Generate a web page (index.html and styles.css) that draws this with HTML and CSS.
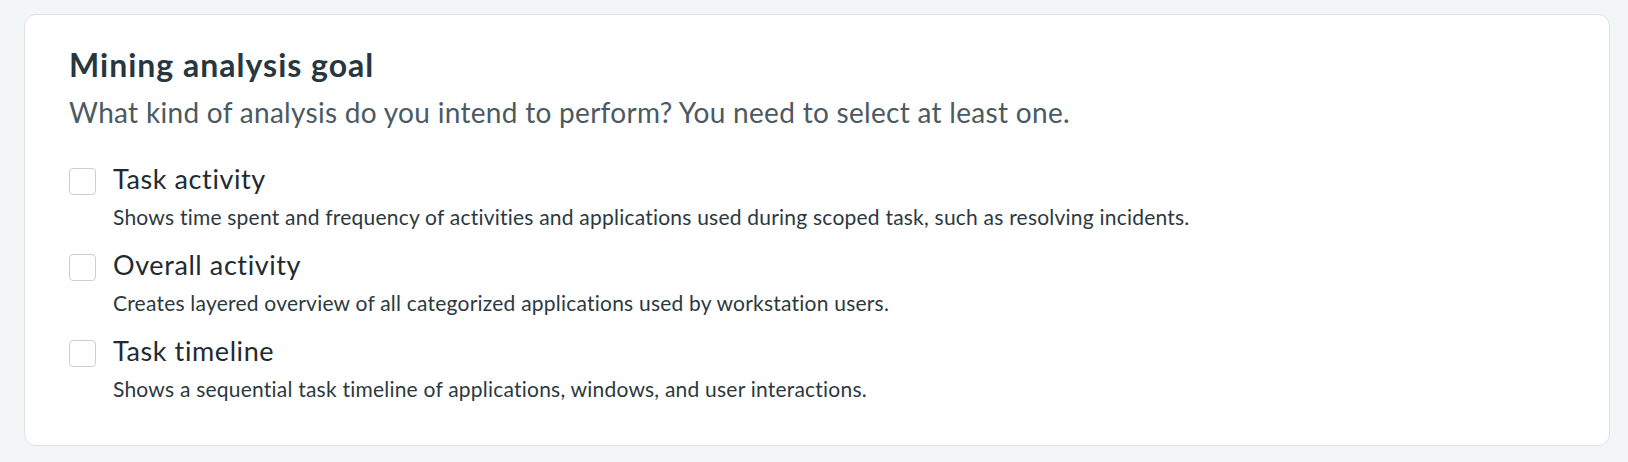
FILE: index.html
```html
<!DOCTYPE html>
<html lang="en">

<head>
    <meta charset="UTF-8">
    <title>Mining analysis goal</title>
    <link rel="stylesheet" href="styles.css">
</head>

<body>
    <div class="card">
        <h2 class="title">Mining analysis goal</h2>
        <p class="subtitle">What kind of analysis do you intend to perform? You need to select at least one.</p>
        <div class="options">
            <label class="option">
                <input type="checkbox" class="check">
                <span class="box"></span>
                <span class="text">
                    <span class="name">Task activity</span>
                    <span class="desc">Shows time spent and frequency of activities and applications used during scoped task, such as resolving incidents.</span>
                </span>
            </label>
            <label class="option">
                <input type="checkbox" class="check">
                <span class="box"></span>
                <span class="text">
                    <span class="name">Overall activity</span>
                    <span class="desc">Creates layered overview of all categorized applications used by workstation users.</span>
                </span>
            </label>
            <label class="option">
                <input type="checkbox" class="check">
                <span class="box"></span>
                <span class="text">
                    <span class="name">Task timeline</span>
                    <span class="desc">Shows a sequential task timeline of applications, windows, and user interactions.</span>
                </span>
            </label>
        </div>
    </div>
</body>

</html>
```

FILE: styles.css
```css
body {
    margin: 0;
    padding: 14px 18px 16px 24px;
    background-color: #f3f6f7;
    font-family: Lato, "Open Sans", sans-serif;
    font-variant-ligatures: none;
}
.card {
    background-color: white;
    border: 1px solid #dbe2e6;
    border-radius: 12px;
    padding: 30px 44px 0 44px;
    height: 432px;
    box-sizing: border-box;
}
.title {
    margin: 0;
    font-size: 32px;
    font-weight: 700;
    letter-spacing: 1px;
    color: #28373f;
    line-height: 40px;
}
.subtitle {
    margin: 9px 0 0 0;
    font-size: 28px;
    color: #4b5a62;
    line-height: 36px;
    letter-spacing: 0.3px;
}
.options {
    margin-top: 32px;
    display: flex;
    flex-direction: column;
    gap: 17px;
}
.option {
    display: flex;
    align-items: flex-start;
    gap: 17px;
    cursor: pointer;
}
.check {
    display: none;
}
.box {
    flex: none;
    width: 27px;
    height: 27px;
    margin-top: 6px;
    border: 1px solid #c6d0d5;
    border-radius: 4px;
    box-sizing: border-box;
    background-color: white;
}
.text {
    display: flex;
    flex-direction: column;
}
.name {
    font-size: 27px;
    color: #1e2b32;
    line-height: 34px;
    letter-spacing: 0.6px;
}
.desc {
    margin-top: 7px;
    font-size: 21px;
    color: #2b3940;
    line-height: 28px;
    letter-spacing: 0.22px;
}
```
